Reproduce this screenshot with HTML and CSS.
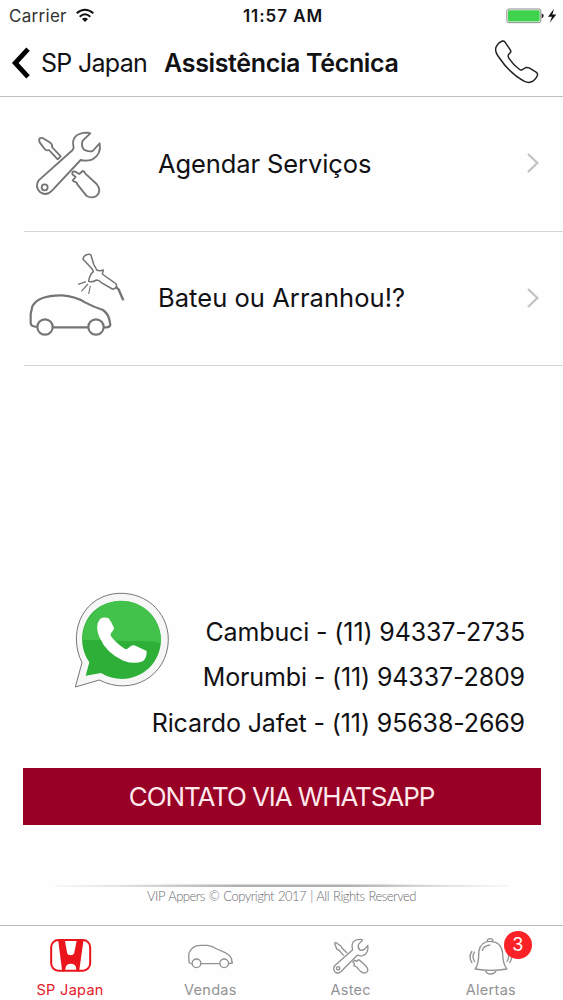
FILE: index.html
```html
<!DOCTYPE html>
<html lang="pt-BR">
<head>
    <meta charset="UTF-8">
    <meta name="viewport" content="width=device-width, initial-scale=1.0">
    <title>Assistência Técnica</title>
    <link rel="stylesheet" href="styles.css">
</head>
<body>
    <div class="status">
        <div class="carrier">
            <span class="carrier-name">Carrier</span>
            <svg class="wifi" viewBox="0 0 60 45">
                <path d="M5 16 Q30 -5 55 16" />
                <path d="M14 26 Q30 12 46 26" />
                <path class="wifi-dot" d="M21 33 Q30 25 39 33 L30 42 Z" />
            </svg>
        </div>
        <span class="time">11:57 AM</span>
        <svg class="battery" viewBox="0 0 156 50">
            <rect x="5.500" y="5.500" width="102" height="41" rx="6" fill="#fff" stroke="#8a8a8a" stroke-width="3" />
            <rect x="9" y="9" width="95" height="34" rx="3" fill="#3fd24c" />
            <path d="M110 19 Q116 20 116 26 Q116 32 110 33 Z" fill="#222" />
            <path d="M147 5 L129 29 L141 29 L134 47 L154 22 L142 22 Z" fill="#111" />
        </svg>
    </div>

    <header class="nav">
        <a class="back">
            <svg class="back-arrow" viewBox="0 0 60 100"><path d="M52 7 L12 50 L52 93" /></svg>
            <span class="back-text">SP Japan</span>
        </a>
        <h1 class="title">Assistência Técnica</h1>
        <svg class="phone" viewBox="640 115 140 140">
            <path d="M647 138 Q655 124 666 121 Q670 120 673 124 L690 149 Q693 154 688 158 L684 163 Q682 168 685 173 Q699 194 717 207 Q722 211 726 208 L737 202 Q742 201 747 203 L768 216 Q774 220 772 226 Q766 241 752 246 Q744 249 733 244 Q690 222 656 172 Q640 152 647 138 Z" />
        </svg>
    </header>

    <main class="content">
        <ul class="menu">
            <li class="item">
                <svg class="item-icon" viewBox="0 0 390 330">
                    <path d="M191 110 Q180 66 233 65 L241 67 L218 89 Q212 105 222 116 Q234 123 248 120 L269 97 Q275 130 246 146 Q229 151 212 147 L126 239 Q109 257 90 243 Q74 228 86 208 L188 117 Z" />
                    <circle cx="104" cy="229" r="9" />
                    <path d="M143 145 L117 117 Q108 120 104 114 L89 94 Q85 84 91 81 Q96 79 103 84 L121 95 Q128 102 126 108 L152 136 Z" />
                    <path d="M187 190 Q186 180 194 181 L208 189 L218 180 Q224 181 226 188 L260 219 Q276 239 260 254 Q245 264 229 254 L202 220 Q201 213 192 212 L188 208 L197 198 Z" />
                </svg>
                <span class="item-text">Agendar Serviços</span>
                <svg class="chevron" viewBox="0 0 36 60"><path d="M3 3 L31 30 L3 57" /></svg>
            </li>
            <li class="item">
                <svg class="item-icon" viewBox="0 0 390 330">
                    <g transform="translate(0 -12)">
                        <path stroke-width="6.500" d="M80 258 L68 255 Q61 252 62 241 Q60 218 67 196 Q85 162 156 163 Q194 165 225 184 Q249 197 279 207 Q297 220 300 245 Q304 258 290 259 L282 259 M128 259 L235 259" />
                        <circle stroke-width="6.500" cx="105" cy="258" r="23" />
                        <circle stroke-width="6.500" cx="258" cy="258" r="23" />
                        <path stroke-width="4.500" d="M219 55 Q220 42 236 40 Q241 39 243 43 L251 70 Q257 79 260 87 Q269 91 280 87 L277 99 L285 105 L312 124 Q322 128 319 137 Q315 146 307 144 L274 125 Q267 117 260 117 Q246 125 236 121 Q238 102 250 92 Q249 85 242 79 Z" />
                        <path stroke-width="7" d="M317 137 Q327 143 330 155 L340 178" />
                        <path stroke-width="3.500" d="M204 130 L228 122 M214 151 L234 129 M236 159 L241 135" />
                    </g>
                </svg>
                <span class="item-text item-text-wide">Bateu ou Arranhou!?</span>
                <svg class="chevron" viewBox="0 0 36 60"><path d="M3 3 L31 30 L3 57" /></svg>
            </li>
        </ul>

        <section class="contact">
            <div class="contact-top">
                <svg class="whatsapp" viewBox="42 36 288 288">
                    <path fill="#f6f6f7" stroke="#777" stroke-width="3" d="M46 321 L66 248 C25 165 60 60 157 42 C250 27 326 93 325 181 C322 288 215 350 118 300 Z" />
                    <path fill="#2daf38" d="M77 287 L88 247 C43 180 70 85 154 66 C235 48 303 106 303 180 C301 273 203 327 123 279 Z" />
                    <path fill="#42c14b" d="M68 180 C68 118 112 68 178 62 C245 59 302 111 303 180 L303 190 Q275 181 210 184 L110 180 Z" />
                    <path fill="#fff" d="M120 117 Q130 110 145 114 Q155 125 162 144 Q163 151 154 158 Q149 164 155 171 Q169 190 195 207 Q202 209 209 201 Q215 194 223 196 L260 213 Q260 236 248 244 Q224 254 190 242 Q139 220 118 171 Q104 137 120 117 Z" />
                </svg>
                <div class="numbers">
                    <p class="number">Cambuci - (11) 94337-2735</p>
                    <p class="number">Morumbi - (11) 94337-2809</p>
                </div>
            </div>
            <p class="number">Ricardo Jafet - (11) 95638-2669</p>
        </section>

        <button type="button" class="button">CONTATO VIA WHATSAPP</button>

        <footer class="footer">
            <svg class="footer-line" viewBox="0 0 450 4" preserveAspectRatio="none">
                <defs>
                    <linearGradient id="fade">
                        <stop offset="0" stop-color="#d0d0d2" stop-opacity="0.3" />
                        <stop offset="0.400" stop-color="#b0b0b3" />
                        <stop offset="0.650" stop-color="#b0b0b3" />
                        <stop offset="1" stop-color="#d0d0d2" stop-opacity="0.3" />
                    </linearGradient>
                </defs>
                <path fill="url(#fade)" d="M0 1.500 L120 0.500 L330 0.500 L450 1.500 L450 2.500 L330 3 L120 3 L0 2.500 Z" />
            </svg>
            <p class="copyright">VIP Appers © Copyright 2017 | All Rights Reserved</p>
        </footer>
    </main>

    <nav class="tabs">
        <a class="tab active">
            <svg class="tab-icon honda" viewBox="0 0 140 120">
                <rect x="12" y="18" width="117" height="92" rx="22" fill="#fff" stroke="#ea141c" stroke-width="6" />
                <path fill="#ea141c" d="M33 18 L53 18 L60 58 Q62 64 70 64 Q79 64 81 58 L89 18 L109 18 L96 112 L88 112 L86 98 Q83 89 71 89 Q59 89 56 98 L53 112 L45 112 Z" />
            </svg>
            <span class="tab-text">SP Japan</span>
        </a>
        <a class="tab">
            <svg class="tab-icon" viewBox="0 0 140 120">
                <path d="M15 90 L7 87 L5 80 L5 58 Q7 50 17 41 Q26 34 40 34 L62 34 Q75 36 89 45 L114 56 Q134 66 134 82 L136 87 L125 89 M41 89 L98 89" />
                <circle cx="28" cy="88" r="13" />
                <circle cx="111" cy="88" r="13" />
            </svg>
            <span class="tab-text">Vendas</span>
        </a>
        <a class="tab">
            <svg class="tab-icon" viewBox="0 0 140 120">
                <path d="M76 46 Q69 15 102 16 L106 18 L94 31 Q91 42 98 48 Q106 50 112 46 L122 34 Q125 58 107 65 Q98 67 91 63 L41 113 Q31 121 23 113 Q15 103 24 94 L76 48 Z" />
                <circle cx="33" cy="103" r="5" />
                <path d="M50 65 L35 48 L29 46 L23 30 Q22 24 27 26 L42 37 L44 42 L60 57" />
                <path d="M77 84 L83 79 L89 82 L94 77 L101 82 L116 96 Q126 107 119 114 Q110 121 100 112 L87 98 L80 95 L82 89 Z" />
            </svg>
            <span class="tab-text">Astec</span>
        </a>
        <a class="tab alerts">
            <svg class="tab-icon" viewBox="0 0 140 120">
                <path d="M61 24 L61 17 Q69 11 77 17 L77 24 M24 105 Q35 91 35 53 Q39 22 69 22 Q101 22 106 55 Q107 91 119 105 Q72 113 24 105 Z M55 110 Q59 120 70 120 Q82 120 87 110 M45 51 Q48 35 69 33" />
                <path d="M23 53 Q12 67 23 84 M15 51 Q2 68 15 87 M119 53 Q130 67 119 84 M127 51 Q140 68 127 87" />
            </svg>
            <span class="badge">3</span>
            <span class="tab-text">Alertas</span>
        </a>
    </nav>
</body>
</html>
```
FILE: styles.css
```css
* {
    box-sizing: border-box;
}

body {
    font-family: Inter, "Liberation Sans", sans-serif;
    background-color: #fefefe;
    color: #111114;
    margin: 0;
    height: 1000px;
    display: flex;
    flex-direction: column;
    overflow: hidden;
}

h1, p, ul {
    margin: 0;
    padding: 0;
}

svg {
    display: block;
    flex-shrink: 0;
    fill: none;
    stroke-linejoin: round;
    overflow: visible;
}

/* status bar */
.status {
    height: 31px;
    display: grid;
    grid-template-columns: 1fr auto 1fr;
    align-items: center;
    padding: 0 6px 0 9px;
    font-size: 17px;
}

.carrier {
    display: flex;
    align-items: center;
    gap: 8px;
    color: #333;
    letter-spacing: 0.3px;
}

.wifi {
    width: 20px;
    height: 15px;
    stroke: #111;
    stroke-width: 6;
}

.wifi-dot {
    fill: #111;
    stroke: none;
}

.time {
    font-weight: 600;
    letter-spacing: 0.95px;
}

.battery {
    width: 52px;
    height: 17px;
    justify-self: end;
}

/* navigation bar */
.nav {
    height: 66px;
    display: flex;
    align-items: center;
    padding: 0 23px 2px 11px;
    border-bottom: 1px solid #bfbfc1;
    font-size: 25px;
}

.back {
    display: flex;
    align-items: center;
    gap: 10px;
    letter-spacing: -0.7px;
}

.back-arrow {
    width: 20px;
    height: 32px;
    stroke: #000;
    stroke-width: 15;
    stroke-linejoin: miter;
}

.title {
    font-size: 25px;
    font-weight: 600;
    margin-left: 17px;
    letter-spacing: -0.35px;
    white-space: nowrap;
}

.phone {
    width: 46px;
    height: 46px;
    margin: -2px 0 0 auto;
    stroke: #222;
    stroke-width: 4.5;
}

/* list */
.content {
    flex: 1;
}

.menu {
    list-style: none;
    padding-left: 24px;
}

.item {
    height: 134.5px;
    display: flex;
    align-items: center;
    padding: 0 24px 1px 0;
    border-bottom: 1px solid #d4d4d6;
}

.item-icon {
    width: 130px;
    height: 110px;
    margin: 5px 18px 0 -14px;
    stroke: #747476;
    stroke-width: 5.5;
}

.item-text {
    font-size: 25.5px;
    letter-spacing: -0.1px;
}

.item-text-wide {
    letter-spacing: 0.05px;
}

.chevron {
    width: 12px;
    height: 20px;
    margin-left: auto;
    stroke: #c3c3c6;
    stroke-width: 7;
    stroke-linejoin: miter;
}

/* whatsapp numbers */
.contact {
    margin-top: 226px;
    padding: 0 38px 0 74px;
}

.contact-top {
    display: flex;
    justify-content: space-between;
    height: 109px;
}

.whatsapp {
    width: 96px;
    height: 96px;
}

.numbers {
    padding-top: 17.5px;
}

.number {
    font-size: 25px;
    line-height: 45.5px;
    letter-spacing: -0.13px;
    text-align: right;
    white-space: nowrap;
}

.button {
    display: block;
    width: 518px;
    height: 57px;
    margin: 21px 0 0 22.5px;
    padding: 1px 0 0;
    background-color: #980025;
    border: none;
    color: #ffe9ec;
    font-family: inherit;
    font-size: 26px;
    font-weight: 400;
    letter-spacing: -1.1px;
}

/* footer */
.footer {
    padding: 59px 55px 0;
    text-align: center;
}

.footer-line {
    width: 453px;
    height: 4px;
}

.copyright {
    font-family: Lato, sans-serif;
    font-size: 13px;
    font-weight: 300;
    line-height: 17px;
    letter-spacing: -0.5px;
    word-spacing: 1px;
    color: #6c6c70;
    white-space: nowrap;
}

/* bottom tabs */
.tabs {
    height: 75px;
    display: flex;
    border-top: 1px solid #bcbcbe;
}

.tab {
    flex: 1;
    position: relative;
    display: flex;
    flex-direction: column;
    align-items: center;
    padding-top: 8px;
    color: #929294;
    font-size: 14.5px;
}

.tab-icon {
    width: 47px;
    height: 40px;
    stroke: #929294;
    stroke-width: 4;
}

.honda {
    stroke: none;
}

.alerts {
    padding-right: 2px;
}

.tab-text {
    margin-top: 7px;
    line-height: 18px;
    letter-spacing: 0.3px;
}

.active {
    color: #e3202a;
}

.badge {
    position: absolute;
    top: 5px;
    left: 83px;
    width: 28px;
    height: 28px;
    border-radius: 50%;
    background-color: #fa2127;
    color: #fff;
    font-size: 18px;
    line-height: 28px;
    text-align: center;
}
```
